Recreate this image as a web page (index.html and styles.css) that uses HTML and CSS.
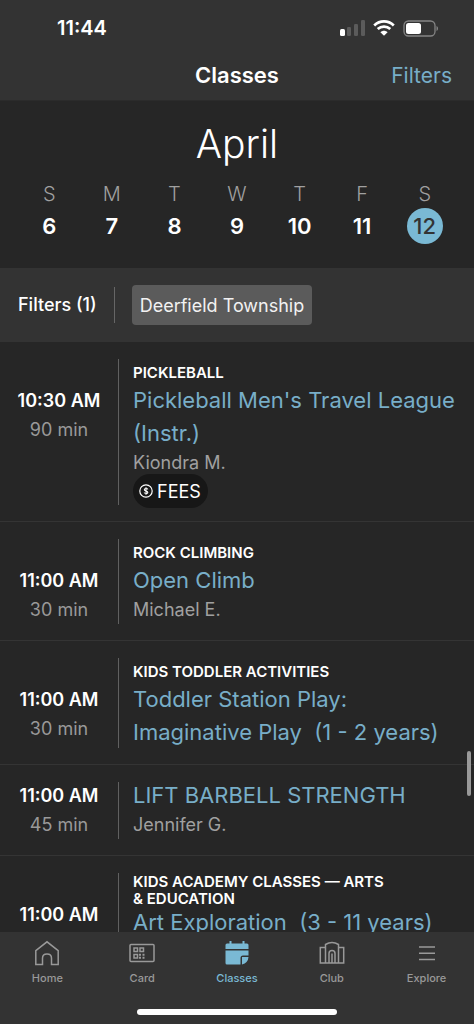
FILE: index.html
```html
<!DOCTYPE html>
<html lang="en">
<head>
<meta charset="utf-8">
<meta name="viewport" content="width=device-width, initial-scale=1">
<title>Classes</title>
<link rel="stylesheet" href="styles.css">
</head>
<body>
<div class="app">
  <header class="header">
    <div class="status">
      <span class="clock">11:44</span>
      <div class="indicators">
        <svg width="26" height="18" viewBox="0 0 26 18" aria-hidden="true"><rect x="1" y="10" width="5" height="7" rx="1.5" fill="#fff"/><g fill="#5b5b5b"><rect x="8" y="8" width="4" height="9" rx="1.2"/><rect x="15" y="5" width="4" height="12" rx="1.2"/><rect x="22" y="1" width="4" height="16" rx="1.2"/></g></svg>
        <svg width="22" height="16" viewBox="0 0 22 16" aria-hidden="true" fill="none" stroke="#fff" stroke-width="2.7"><path d="M1.2 5.4C6.8.1 15.2.1 20.8 5.4M4.7 9.1c3.6-3.3 9-3.3 12.6 0"/><path d="M11 15.8 7.4 12.3c2.1-2 5.1-2 7.2 0z" fill="#fff" stroke="none"/></svg>
        <svg width="36" height="17" viewBox="0 0 36 17" aria-hidden="true"><rect x="1" y="1" width="31" height="15" rx="4.5" fill="none" stroke="#858585" stroke-width="1.3"/><rect x="3" y="3" width="15" height="11" rx="2.5" fill="#fff"/><path d="M33.5 6c2 .8 2 4.2 0 5z" fill="#858585"/></svg>
      </div>
    </div>
    <div class="titlebar">
      <h1 class="page-title">Classes</h1>
      <button class="filters-button" type="button">Filters</button>
    </div>
  </header>

  <section class="calendar">
    <h2 class="month">April</h2>
    <div class="week">
      <button class="day" type="button"><span class="weekday">S</span><span class="date">6</span></button>
      <button class="day" type="button"><span class="weekday">M</span><span class="date">7</span></button>
      <button class="day" type="button"><span class="weekday">T</span><span class="date">8</span></button>
      <button class="day" type="button"><span class="weekday">W</span><span class="date">9</span></button>
      <button class="day" type="button"><span class="weekday">T</span><span class="date">10</span></button>
      <button class="day" type="button"><span class="weekday">F</span><span class="date">11</span></button>
      <button class="day" type="button" aria-pressed="true"><span class="weekday">S</span><span class="date date-selected">12</span></button>
    </div>
  </section>

  <section class="filterbar">
    <span class="filter-count">Filters (1)</span>
    <button class="chip" type="button">Deerfield Township</button>
  </section>

  <main class="list">
    <article class="class-row">
      <div class="when when-offset"><span class="time">10:30 AM</span><span class="length">90 min</span></div>
      <div class="details">
        <div class="category">PICKLEBALL</div>
        <a class="class-name" href="#">Pickleball Men's Travel League (Instr.)</a>
        <div class="coach">Kiondra M.</div>
        <div class="fees"><svg width="14" height="14" viewBox="0 0 14 14" fill="none" stroke="#fff" aria-hidden="true"><circle cx="7" cy="7" r="6.2" stroke-width="1.2"/><path d="M8.8 5.4C8.5 4.2 5.3 4.2 5.3 5.8S8.800 6.800 8.800 8.400 5.400 9.800 5.200 8.500M7 3.300v7.400" stroke-width="1.1"/></svg>FEES</div>
      </div>
    </article>
    <article class="class-row">
      <div class="when when-offset"><span class="time">11:00 AM</span><span class="length">30 min</span></div>
      <div class="details">
        <div class="category">ROCK CLIMBING</div>
        <a class="class-name" href="#">Open Climb</a>
        <div class="coach">Michael E.</div>
      </div>
    </article>
    <article class="class-row">
      <div class="when when-offset"><span class="time">11:00 AM</span><span class="length">30 min</span></div>
      <div class="details">
        <div class="category">KIDS TODDLER ACTIVITIES</div>
        <a class="class-name" href="#">Toddler Station Play: Imaginative Play&nbsp; (1 - 2 years)</a>
      </div>
    </article>
    <article class="class-row">
      <div class="when"><span class="time">11:00 AM</span><span class="length">45 min</span></div>
      <div class="details">
        <a class="class-name" href="#">LIFT BARBELL STRENGTH</a>
        <div class="coach">Jennifer G.</div>
      </div>
    </article>
    <article class="class-row">
      <div class="when when-offset"><span class="time">11:00 AM</span></div>
      <div class="details">
        <div class="category">KIDS ACADEMY CLASSES — ARTS &amp;&nbsp;EDUCATION</div>
        <a class="class-name" href="#">Art Exploration&nbsp; (3 - 11 years)</a>
      </div>
    </article>
    <div class="scroll-thumb"></div>
  </main>

  <footer class="footer">
    <nav class="tabs">
      <a class="tab" href="#"><svg width="26" height="26" viewBox="0 0 26 26" aria-hidden="true"><path d="M1.800 24.500V10.700L13 1.800l11.200 8.900v13.800h-6.700v-6.200c0-5.600-9-5.600-9 0v6.200z"/></svg><span>Home</span></a>
      <a class="tab" href="#"><svg width="26" height="26" viewBox="0 0 26 26" aria-hidden="true"><rect x="1" y="4.500" width="24" height="17" rx="1"/><path d="M5 8h3.500v3.500H5zM11 8h3.500v3.500H11zM5 14.500h3.500V18H5z"/><path d="M11 13.800v2M14.500 13.800v2M11 16.700v2M14.500 16.700v2" stroke-width="2"/></svg><span>Card</span></a>
      <a class="tab tab-active" href="#" aria-current="page"><svg width="26" height="26" viewBox="0 0 26 26" aria-hidden="true"><path class="solid" d="M3 3.500h2.500V1h2v2.500h11V1h2v2.500H23q1.500 0 1.500 1.500v4h-23V5Q1.500 3.500 3 3.500zM1.500 10.500h23v5H19q-2.500 0-2.500 2.500v6.500H3q-1.500 0-1.500-1.500zM18 17h6.500q-.5 6-6.500 7.500z"/></svg><span>Classes</span></a>
      <a class="tab" href="#"><svg width="26" height="26" viewBox="0 0 26 26" aria-hidden="true"><path d="M6.500 7.500H1.300V23h23.400V7.500h-5.200M6.500 23V4.500Q13 .7 19.500 4.500V23M10 23v-9.500c0-4 6-4 6 0V23M13 13.500V23"/></svg><span>Club</span></a>
      <a class="tab" href="#"><svg width="26" height="26" viewBox="0 0 26 26" aria-hidden="true"><path d="M5 7h16M5 13.200h16M5 19.400h16"/></svg><span>Explore</span></a>
    </nav>
    <div class="home-indicator"></div>
  </footer>
</div>
</body>
</html>
```
FILE: styles.css
```css
* { box-sizing: border-box; }

body {
  margin: 0;
  background: #262626;
  color: #fff;
  font-family: Inter, "Liberation Sans", sans-serif;
}

button {
  border: 0;
  padding: 0;
  background: none;
  color: inherit;
  font: inherit;
}

a { text-decoration: none; }

.app {
  display: flex;
  flex-direction: column;
  height: 100vh;
}

.header {
  flex: none;
  padding-top: 12px;
  background: #333;
}

.status {
  display: flex;
  justify-content: space-between;
  align-items: center;
  height: 32px;
  padding: 0 35px 0 57px;
}

.clock {
  font-size: 20px;
  font-weight: 600;
}

.indicators {
  display: flex;
  align-items: center;
  gap: 8px;
}

.titlebar {
  display: grid;
  grid-template-columns: 1fr auto 1fr;
  align-items: center;
  height: 56px;
  padding: 6px 22px 0;
}

.page-title {
  grid-column: 2;
  margin: 0;
  padding-bottom: 1px;
  font-size: 22px;
  font-weight: 600;
}

.filters-button {
  justify-self: end;
  padding-top: 1px;
  color: #78aec8;
  font-size: 21px;
}

.calendar {
  flex: none;
  padding: 20px 18px 24px;
  border-top: 1px solid #2b2b2b;
}

.month {
  margin: 0 0 14px;
  font-size: 39px;
  font-weight: 300;
  line-height: 46px;
  text-align: center;
}

.week {
  display: grid;
  grid-template-columns: repeat(7, 1fr);
}

.day {
  display: flex;
  flex-direction: column;
  align-items: center;
}

.weekday {
  color: #a0a0a0;
  font-size: 20px;
  font-weight: 300;
  line-height: 27px;
}

.date {
  width: 36px;
  height: 36px;
  border-radius: 50%;
  font-size: 22px;
  font-weight: 600;
  line-height: 36px;
  text-align: center;
}

.date-selected {
  background: #7ab9d4;
  color: #333;
  font-weight: 500;
}

.filterbar {
  display: flex;
  flex: none;
  align-items: center;
  gap: 17px;
  height: 74px;
  padding: 0 18px;
  background: #333;
}

.filter-count {
  padding-right: 17px;
  border-right: 1px solid #666;
  font-size: 18px;
  font-weight: 500;
  line-height: 36px;
}

.chip {
  height: 40px;
  padding: 0 8px;
  border-radius: 4px;
  background: #5b5b5b;
  color: #f2f2f2;
  font-size: 18px;
}

.list {
  position: relative;
  flex: 1;
  min-height: 0;
  overflow: hidden;
}

.class-row {
  display: flex;
  padding: 17px 18px 16px 0;
  border-bottom: 1px solid #343434;
}

.when {
  display: flex;
  flex: none;
  flex-direction: column;
  align-items: center;
  width: 118px;
}

.when-offset { padding-top: 28px; }

.time {
  font-size: 18px;
  font-weight: 600;
  line-height: 28px;
}

.length {
  color: #999;
  font-size: 18px;
  line-height: 29px;
}

.details {
  flex: 1;
  min-width: 0;
  padding-left: 14px;
  border-left: 1px solid #606060;
}

.category {
  display: flex;
  align-items: center;
  min-height: 28px;
  max-width: 270px;
  padding-bottom: 2px;
  font-size: 15px;
  font-weight: 600;
  line-height: 17px;
}

.class-name {
  display: block;
  margin: -3px 0 -1px;
  color: #78aec8;
  font-size: 22px;
  line-height: 33px;
}

.coach {
  color: #a0a0a0;
  font-size: 18px;
  line-height: 27px;
}

.fees {
  display: inline-flex;
  align-items: center;
  gap: 4px;
  height: 34px;
  margin: -2px 0 -3px;
  padding: 0 7px 0 6px;
  border-radius: 17px;
  background: #171717;
  font-size: 18px;
}

.scroll-thumb {
  position: absolute;
  top: 409px;
  right: 3px;
  width: 4px;
  height: 45px;
  border-radius: 2px;
  background: #999;
}

.footer {
  flex: none;
  padding: 8px 0 9px;
  background: #333;
}

.tabs {
  display: grid;
  grid-template-columns: repeat(5, 1fr);
}

.tab {
  display: flex;
  flex-direction: column;
  align-items: center;
  gap: 4px;
  color: #999;
  font-size: 11px;
  font-weight: 500;
  line-height: 16px;
}

.tab svg {
  fill: none;
  stroke: currentColor;
  stroke-width: 1.5;
}

.tab .solid {
  fill: currentColor;
  stroke: none;
}

.tab-active { color: #7ab9d4; }

.home-indicator {
  width: 42%;
  height: 6px;
  margin: 23px auto 0;
  border-radius: 3px;
  background: #fff;
}
```
